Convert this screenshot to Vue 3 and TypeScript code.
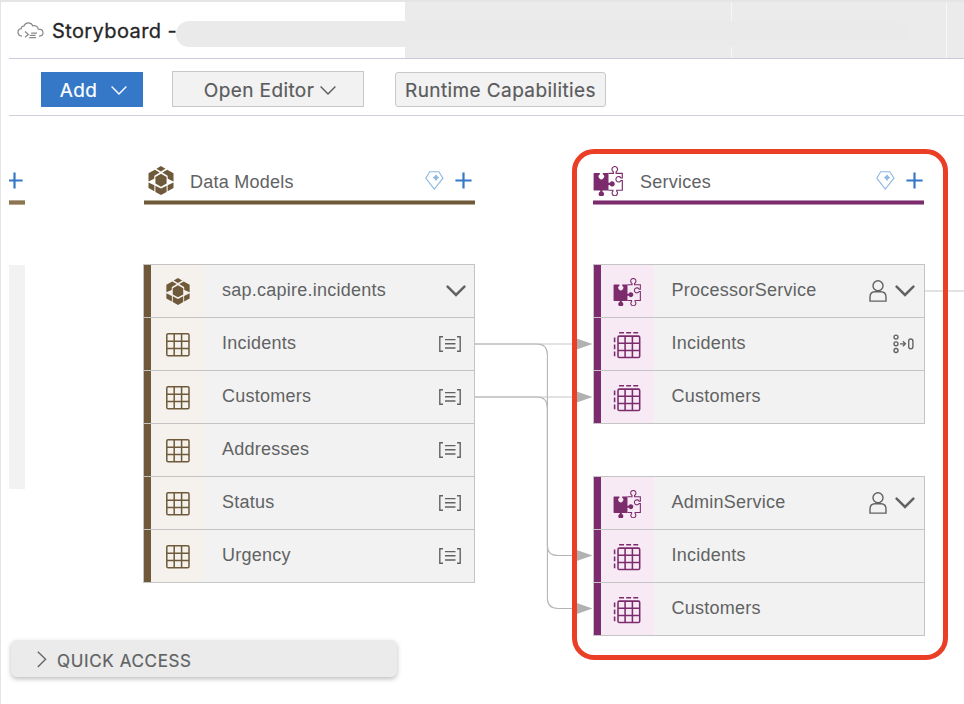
<script setup lang="ts">
interface Row {
  label: string
  icon: string
  trail?: string[]
}

interface Column {
  title: string
  icon: string
  tone: string
  cards: Row[][]
}

const entity = (label: string): Row => ({ label, icon: 'table', trail: ['aspect'] })
const projection = (label: string, trail: string[] = []): Row => ({ label, icon: 'projection', trail })

const columns: Column[] = [
  {
    title: 'Data Models',
    icon: 'cube',
    tone: 'brown',
    cards: [
      [
        { label: 'sap.capire.incidents', icon: 'cube', trail: ['chevron'] },
        entity('Incidents'),
        entity('Customers'),
        entity('Addresses'),
        entity('Status'),
        entity('Urgency'),
      ],
    ],
  },
  {
    title: 'Services',
    icon: 'puzzle',
    tone: 'plum',
    cards: [
      [
        { label: 'ProcessorService', icon: 'puzzle', trail: ['person', 'chevron'] },
        projection('Incidents', ['flow']),
        projection('Customers'),
      ],
      [
        { label: 'AdminService', icon: 'puzzle', trail: ['person', 'chevron'] },
        projection('Incidents'),
        projection('Customers'),
      ],
    ],
  },
]

const arrowRows = [344, 397, 555.5, 608.5]
</script>

<template>
  <div class="page">
    <svg class="defs" width="0" height="0" aria-hidden="true">
      <symbol id="cube" viewBox="0 0 25 29">
        <g fill="currentColor">
          <path d="M12.4 0 17 2.700 12.400 5.500 7.900 2.700Z" />
          <path d="M0 7.300 6.300 3.700 11.200 6.500 5.900 9.700 5.700 12.800 0 15.400Z" />
          <path d="M25 7.300 18.700 3.700 13.800 6.500 19.100 9.700 19.300 12.800 25 15.400Z" />
          <path d="M12.5 7.700 18.100 10.900V17.600L12.500 20.700 6.900 17.600V10.900Z" />
          <path d="M0 16.400 5.900 19.200V25.300L0 21.900Z" />
          <path d="M25 16.400 19.100 19.200V25.300L25 21.900Z" />
          <path d="M6.900 19.700 12.500 22.600 18.100 19.700V25.900L12.500 29 6.900 25.900Z" />
        </g>
      </symbol>
      <symbol id="puzzle" viewBox="0 0 30 30">
        <path
          fill="currentColor"
          d="M1.3 6.900H6.900V8.200A2.700 2.700 0 1 0 9.800 8.200V6.900H15.500V16.800H16.800A2.600 2.600 0 1 1 16.800 19H15.500V24.600H9.400V25.500A2.700 2.700 0 1 1 7.300 25.500V24.600H1.300A.7.7 0 0 1 .6 23.900V7.600A.7.7 0 0 1 1.300 6.900Z"
        />
        <path
          fill="none"
          stroke="currentColor"
          stroke-width="1.15"
          d="M15.5 7.300H20.400V5.800A2.800 2.800 0 1 1 23.100 5.800V7.300H29.300V12H28A2.700 2.700 0 1 0 28 14.500H29.300V24.200H23.700V25.200A2.700 2.700 0 1 1 19.900 25.200V24.200H15.500"
        />
      </symbol>
      <symbol id="table" viewBox="0 0 24 24">
        <g fill="none" stroke="currentColor" stroke-width="1.5">
          <rect x=".8" y=".8" width="22.200" height="22" rx="1.3" />
          <path d="M8.200 1V23M15.600 1V23M1 8.200H23M1 15.500H23" />
        </g>
      </symbol>
      <symbol id="projection" viewBox="0 0 28 28">
        <g fill="none" stroke="currentColor" stroke-width="1.55">
          <rect x="5" y="5.100" width="21.700" height="21.400" rx="1.3" />
          <path d="M12.100 5V26.500M19.400 5V26.500M5 12.200H26.700M5 19.400H26.700" />
          <path d="M6.100 1.700H11M13.200 1.700H18.100M20.300 1.700H25.200M1.600 6.600V11.200M1.600 13.600V18.200M1.600 20.600V25.200" />
        </g>
      </symbol>
      <symbol id="aspect" viewBox="0 0 22 16">
        <path
          d="M4 .7H.8V15.300H4M18 .7H21.200V15.300H18M6 3.600H16.500M6 7.800H16.500M6 12H16.500"
          fill="none"
          stroke="currentColor"
          stroke-width="1.4"
        />
      </symbol>
      <symbol id="chevron" viewBox="0 0 20 12">
        <path d="M1.600 1.600 10 10 18.400 1.600" fill="none" stroke="currentColor" stroke-width="2.5" stroke-linecap="round" />
      </symbol>
      <symbol id="person" viewBox="0 0 18 22">
        <g fill="none" stroke="currentColor" stroke-width="1.4">
          <circle cx="9" cy="5.800" r="5" />
          <path d="M1 21.100V17.100Q1 11.700 6 11.700H12Q17 11.700 17 17.100V21.100Z" />
        </g>
      </symbol>
      <symbol id="flow" viewBox="0 0 21 20">
        <g fill="none" stroke="currentColor" stroke-width="1.35">
          <circle cx="3" cy="3.100" r="2" />
          <circle cx="3" cy="9.800" r="2" />
          <circle cx="3" cy="16.500" r="2" />
          <path d="M7 9.800H12.300M9.900 7.300 12.400 9.800 9.900 12.300" />
          <rect x="15.700" y="5" width="4.200" height="9.800" rx="2.100" />
        </g>
      </symbol>
      <symbol id="gem" viewBox="0 0 19 19">
        <path d="M4.700 .8H13.800L18 7.200 9.300 18 .8 7.200Z" fill="none" stroke="currentColor" stroke-width="1.100" />
        <path d="M11 3.900 12 5.600 13.800 6.600 12 7.600 11 9.400 10 7.600 8.200 6.600 10 5.600Z" fill="currentColor" stroke="currentColor" stroke-width=".9" />
      </symbol>
      <symbol id="plus" viewBox="0 0 17 17">
        <path d="M8.500 .4V16.600M.4 8.500H16.600" fill="none" stroke="currentColor" stroke-width="2.200" />
      </symbol>
      <symbol id="thin-chevron" viewBox="0 0 16 9">
        <path d="M.6 .6 8 8 15.400 .6" fill="none" stroke="currentColor" stroke-width="1.400" />
      </symbol>
    </svg>

    <header class="titlebar">
      <svg class="cloud" viewBox="0 0 27 17">
        <g fill="none" stroke="currentColor" stroke-width="1.25">
          <path d="M5 14.2C2.400 14 1 12.300 1 10.300C1 8.100 2.600 6.900 4.300 6.700C4.200 5 5.300 4.100 6.700 4.200C7.700 2 9.200 .8 11.300 .8C13.700 .8 15.100 2 16 3.900C18.600 3 20.900 4.600 21.200 7C24.300 7 26 8.600 26 10.800C26 13 24.300 14.200 22 14.200" />
          <path d="M8 9.600 11.300 12.400 8 15.200M14.200 11.200H20M12.700 13.400H18.600M12.200 15.500H19" />
        </g>
      </svg>
      <h1 class="title">Storyboard -</h1>
      <div class="redacted"></div>
      <div class="tabs">
        <span class="tab wide"></span>
        <span class="tab mid"></span>
        <span class="tab rest"></span>
      </div>
    </header>

    <nav class="toolbar">
      <button class="btn add">
        <span>Add</span>
        <svg class="caret"><use href="#thin-chevron" /></svg>
      </button>
      <button class="btn editor">
        <span>Open Editor</span>
        <svg class="caret"><use href="#thin-chevron" /></svg>
      </button>
      <button class="btn runtime"><span>Runtime Capabilities</span></button>
    </nav>

    <main class="board">
      <section class="stub">
        <div class="colhead"><svg class="plus"><use href="#plus" /></svg></div>
        <div class="stub-body"></div>
      </section>

      <section v-for="col in columns" :key="col.title" class="column" :class="col.tone">
        <div class="colhead">
          <svg class="headicon" :class="col.icon"><use :href="'#' + col.icon" /></svg>
          <h2>{{ col.title }}</h2>
          <svg class="gem"><use href="#gem" /></svg>
          <svg class="plus"><use href="#plus" /></svg>
        </div>
        <div class="cards">
          <ul v-for="(card, i) in col.cards" :key="i" class="card">
            <li v-for="row in card" :key="row.label" class="row">
              <span class="cell">
                <svg :class="row.icon"><use :href="'#' + row.icon" /></svg>
              </span>
              <span class="label">{{ row.label }}</span>
              <svg v-for="t in row.trail" :key="t" :class="t"><use :href="'#' + t" /></svg>
            </li>
          </ul>
        </div>
      </section>
    </main>

    <svg class="links" viewBox="0 0 964 704">
      <g fill="none" stroke="#b5b5b5" stroke-width="1.1">
        <path d="M475 344H580M475 397H580" stroke="#c6c6c6" />
        <path d="M475 344H537Q547.400 344 547.400 355V545.500Q547.400 555.500 558 555.500H580" />
        <path d="M475 397H537Q547.400 397 547.400 408V598Q547.400 608.500 558 608.500H580" />
        <path d="M925 291H964" stroke="#d9d9d9" stroke-width="1.6" />
      </g>
      <path v-for="y in arrowRows" :key="y" :d="`M576 ${y - 5.7}L592.5 ${y}L576 ${y + 5.7}Z`" fill="#b1b1b1" />
    </svg>

    <div class="highlight"></div>

    <aside class="quick">
      <svg viewBox="0 0 10 17"><path d="M.8 .8 8.600 8.300 .8 16" fill="none" stroke="currentColor" stroke-width="1.300" /></svg>
      <span>QUICK ACCESS</span>
    </aside>
  </div>
</template>

<style>
body {
  background: #fff;
  overflow: hidden;
}
</style>

<style scoped>
.page {
  position: relative;
  box-sizing: border-box;
  width: 964px;
  height: 704px;
  overflow: hidden;
  border-top: 2px solid #e5e5e5;
  border-left: 1px solid #e4e4e4;
  background: #fff;
  font-family: Inter, "Liberation Sans", sans-serif;
  color: #616263;
}
.defs {
  position: absolute;
}
.titlebar {
  display: flex;
  align-items: center;
  box-sizing: border-box;
  height: 57px;
  margin-left: 8px;
  padding-left: 8px;
  border-bottom: 1px solid #cbcada;
}
.cloud {
  flex: none;
  width: 27px;
  height: 17px;
  color: #8b8b8b;
}
.title {
  flex: none;
  width: 124px;
  margin: 1px 0 0 8px;
  font-size: 20px;
  font-weight: 400;
  line-height: 26px;
  letter-spacing: 0.4px;
  white-space: nowrap;
  color: #262626;
  -webkit-text-stroke: 0.3px currentColor;
}
.redacted {
  z-index: 1;
  flex: none;
  width: 732px;
  height: 26px;
  margin: 8px -503px 1px 0;
  border-radius: 13px;
  background: #eaeaea;
}
.tabs {
  display: flex;
  flex: 1;
  gap: 1px;
  align-self: stretch;
  background: #f6f6f6;
}
.tab {
  background: #ebebeb;
}
.wide {
  width: 326px;
}
.mid {
  width: 214px;
}
.rest {
  flex: 1;
}
.toolbar {
  display: flex;
  box-sizing: border-box;
  align-items: flex-end;
  height: 57px;
  margin-left: 8px;
  padding: 0 0 8px 32px;
  border-bottom: 1px solid #cfceda;
}
.btn {
  display: flex;
  box-sizing: border-box;
  align-items: center;
  justify-content: center;
  height: 35px;
  margin: 0;
  padding: 2px 0 0;
  border: 1px solid #c6c8ca;
  background: #f2f2f2;
  font: 400 19px/24px Inter, sans-serif;
  letter-spacing: 0.4px;
  color: #5a5b5c;
  white-space: nowrap;
  -webkit-text-stroke: 0.2px currentColor;
}
.add {
  width: 102px;
  gap: 14px;
  padding-left: 3px;
  border-color: #3578c8;
  background: #3578c8;
  color: #fff;
}
.editor {
  width: 192px;
  height: 36px;
  gap: 6px;
  margin-left: 29px;
  padding: 3px 0 0 4px;
}
.runtime {
  width: 211px;
  margin-left: 31px;
  border-radius: 3px;
}
.caret {
  width: 16px;
  height: 9px;
}
.board {
  display: grid;
  grid-template-columns: 16px 332px 332px;
  column-gap: 118px;
  align-items: start;
  padding: 44px 0 0 8px;
}
.colhead {
  display: flex;
  align-items: center;
  box-sizing: border-box;
  height: 45px;
  padding-bottom: 5px;
  background: linear-gradient(var(--soft) 0 1px, var(--tone) 1px 4px, var(--soft) 4px) bottom / 100% 5px no-repeat;
}
.stub {
  --tone: #8c7553;
  --soft: #b3a48c;
  overflow: hidden;
}
.brown {
  --tone: #6e5a3a;
  --soft: #b5aa95;
  --tint: #f5f1ec;
}
.plum {
  --tone: #7c2c6c;
  --soft: #b98cb1;
  --tint: #f7eaf5;
}
.brown .colhead {
  margin-left: 1px;
}
.plum .colhead {
  margin-right: 1px;
}
.stub .plus {
  flex: none;
  margin-left: -3px;
}
.stub-body {
  height: 224px;
  margin-top: 60px;
  background: #f2f2f2;
}
.headicon {
  color: var(--tone);
}
.headicon.cube {
  width: 26px;
  height: 29px;
  margin: 0 16px 0 4px;
}
.headicon.puzzle {
  width: 30px;
  height: 30px;
  margin: 1px 17px 0 0;
}
h2 {
  flex: 1;
  margin: 3px 0 0;
  font: 400 18px/24px "Liberation Sans", Arial, sans-serif;
  letter-spacing: 0.25px;
}
.gem {
  width: 19px;
  height: 19px;
  margin-right: 11px;
  color: #8db7e4;
}
.plus {
  width: 17px;
  height: 17px;
  margin-right: 3px;
  color: #3578c8;
}
.plum .colhead .plus {
  margin-right: 1px;
}
.cards {
  display: flex;
  flex-direction: column;
  gap: 52px;
  margin-top: 59px;
}
.card {
  box-sizing: border-box;
  margin: 0;
  padding: 0;
  border: 1px solid #c4c4c4;
  border-top: 0;
  background: #f2f2f2;
  list-style: none;
}
.row {
  display: flex;
  align-items: center;
  box-sizing: border-box;
  height: 53px;
  padding-right: 9px;
  border-top: 1px solid #c4c4c4;
}
.cell {
  display: flex;
  align-items: center;
  justify-content: center;
  flex: none;
  box-sizing: border-box;
  width: 60px;
  height: 100%;
  margin-right: 18px;
  padding: 1px 0 0 1px;
  border-left: 7px solid var(--tone);
  background: var(--tint);
  color: var(--tone);
}
.plum .cell {
  margin-right: 17.5px;
  padding: 1px 2px 0 0;
}
.cell .cube {
  width: 24px;
  height: 27px;
}
.cell .puzzle {
  width: 28px;
  height: 28px;
}
.cell .table {
  width: 24px;
  height: 24px;
}
.cell .projection {
  width: 28px;
  height: 28px;
}
.label {
  flex: 1;
  margin-top: -2px;
  font: 400 18px/24px "Liberation Sans", Arial, sans-serif;
  letter-spacing: 0.24px;
  white-space: nowrap;
}
.row > .aspect {
  width: 22px;
  height: 16px;
  margin: 0 4px 1px 0;
}
.row > .chevron {
  width: 20px;
  height: 12px;
}
.brown .row > .chevron {
  margin-right: -1px;
}
.row > .person {
  width: 18px;
  height: 22px;
  margin-right: 8.5px;
}
.row > .flow {
  width: 21px;
  height: 20px;
  margin-right: 1px;
}
.links {
  position: absolute;
  top: -2px;
  left: -1px;
  width: 964px;
  height: 704px;
}
.highlight {
  position: absolute;
  top: 147px;
  left: 571px;
  box-sizing: border-box;
  width: 376px;
  height: 511px;
  border: 5px solid #ea3f26;
  border-radius: 22px;
}
.quick {
  position: absolute;
  left: 10px;
  top: 638px;
  display: flex;
  align-items: center;
  box-sizing: border-box;
  width: 386px;
  height: 37px;
  padding: 4px 0 0 26px;
  border-radius: 6px;
  background: #ebebeb;
  box-shadow: 0 2px 5px rgba(0, 0, 0, 0.26);
  font-size: 17px;
  font-weight: 400;
  letter-spacing: 0.65px;
  -webkit-text-stroke: 0.2px currentColor;
}
.quick svg {
  width: 10px;
  height: 17px;
  margin: 0 10px 3px 0;
}
</style>
